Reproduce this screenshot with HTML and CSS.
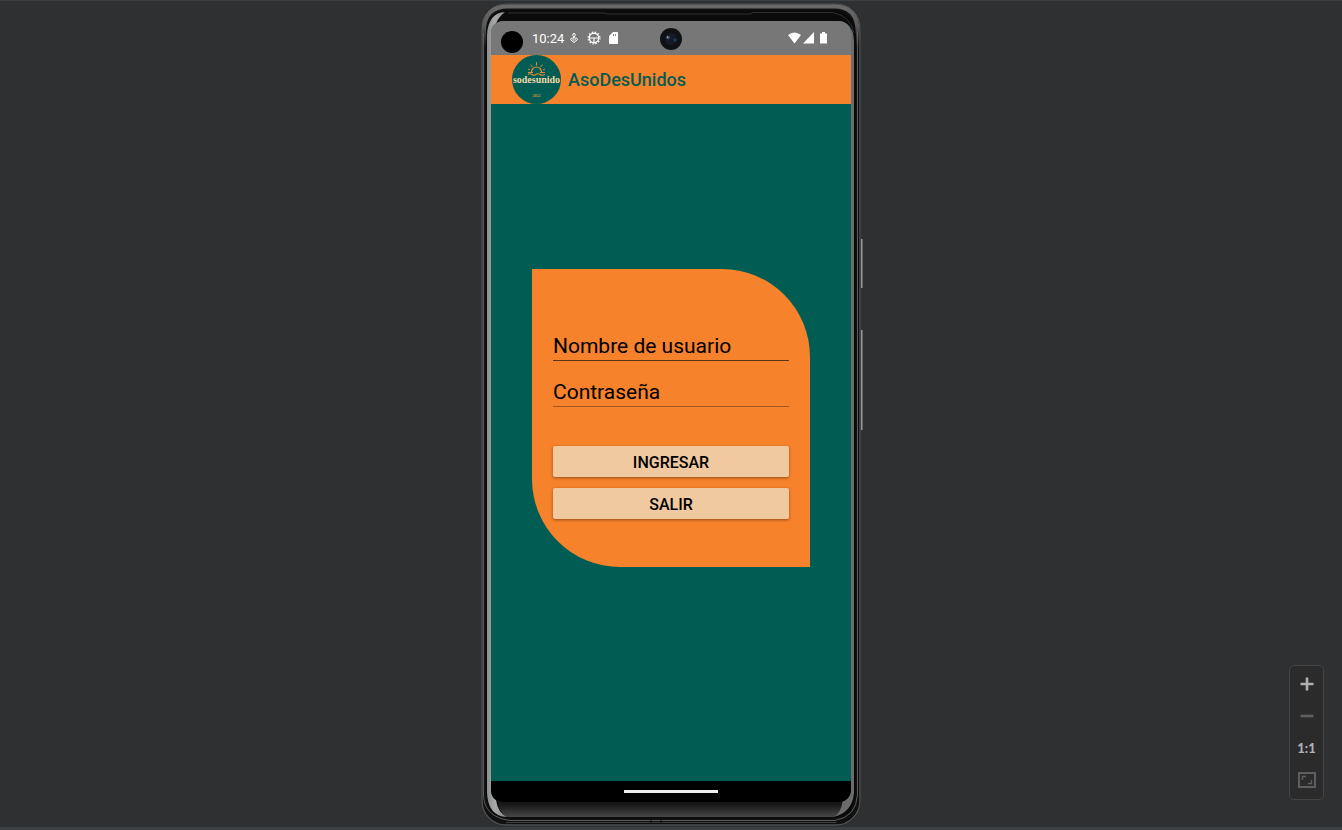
FILE: index.html
```html
<!DOCTYPE html>
<html lang="es">
<head>
<meta charset="utf-8">
<meta name="viewport" content="width=device-width, initial-scale=1">
<title>AsoDesUnidos</title>
<link rel="stylesheet" href="styles.css">
</head>
<body class="emulator">
<main class="stage">
  <div class="phone">
    <svg class="frame" viewBox="0 0 382 823" preserveAspectRatio="none" aria-hidden="true">
      <defs>
        <linearGradient id="silver" x1="0" y1="0" x2="1" y2="0">
          <stop offset="0" stop-color="#8e8e8e"/><stop offset=".4" stop-color="#a8a8a8"/><stop offset="1" stop-color="#858585"/>
        </linearGradient>
        <linearGradient id="chin" x1="0" y1="0" x2="0" y2="1">
          <stop offset="0" stop-color="#080808"/><stop offset=".5" stop-color="#191919"/><stop offset="1" stop-color="#484848"/>
        </linearGradient>
        <linearGradient id="rim" gradientUnits="userSpaceOnUse" x1="0" y1="2" x2="0" y2="44">
          <stop offset="0" stop-color="#6a6a6a"/><stop offset=".5" stop-color="#5a5a5a"/><stop offset="1" stop-color="#5a5a5a" stop-opacity="0"/>
        </linearGradient>
      </defs>
      <rect x="380" y="236" width="2.500" height="49" fill="#9a9a9a"/>
      <rect x="380" y="327" width="2.500" height="100" fill="#9a9a9a"/>
      <rect x="1" y="0" width="380" height="823" rx="25" fill="#1a1a1b"/>
      <rect x="2" y="1" width="378" height="821" rx="24" fill="#101010" stroke="#4e4f50" stroke-width="1.500"/>
      <path d="M4 44V28Q4 3.500 28 3.500H354Q377.500 3.500 377.500 28V44" fill="none" stroke="url(#rim)" stroke-width="4"/>
      <path d="M6 32Q7 7 29 7H352Q374 7 376 32V790Q375 815 351 815H31Q7 815 6 790V32Z" fill="#0a0a0a"/>
      <path d="M28 10H124L127 11H270L273 9.500H352Q370 12 374 30" fill="none" stroke="#303030"/>
      <path d="M377.500 28V792Q376 814 355 817.500H30Q4 814 3.500 792V30" fill="none" stroke="#5c5c5c"/>
      <path d="M7 32Q8 10 25 9Q17 15 15 24L11 32V788Q12 795 16 797Q18 810 27 814Q8 813 7 790Z" fill="url(#silver)"/>
      <path d="M366 20Q374 26 374 38V790Q372 810 353 814Q361 808 363 793L371 782V32Q371 24 366 20Z" fill="#6c6c6c"/>
      <path d="M17 790H363V797Q361 810 354 814H27Q19 810 17 797Z" fill="url(#chin)"/>
      <path d="M26 819.500H356" stroke="#3b3d3e"/>
      <path d="M171 817V821M181 817V821" stroke="#111"/>
    </svg>
    <div class="screen">
      <header class="status">
        <span class="punch"></span>
        <span class="time">10:24</span>
        <svg class="glyph" viewBox="0 0 10 12" width="10" height="12" fill="none" stroke="#fff" aria-hidden="true"><path d="M5 1L3.500 3L5 5L6.500 3Z M3 5.500L1.500 7.500L5 10.500L8.500 7.500L7 5.500M5 5L3.500 7L5 8.500L6.500 7Z"/></svg>
        <svg class="glyph" viewBox="0 0 14 14" width="14" height="14" fill="none" stroke="#fff" aria-hidden="true"><circle cx="7" cy="7" r="4.700" stroke-width="1.400"/><circle cx="7" cy="7" r="6" stroke-width="1.200" stroke-dasharray="1.500 1.640"/><path d="M2.500 7H11.500M7 7V11.500" stroke-width="1.200"/></svg>
        <svg class="glyph" viewBox="0 0 10 12" width="10" height="12" aria-hidden="true"><path d="M4 0H8Q9 0 9 1V11Q9 12 8 12H1Q0 12 0 11V4Z" fill="#fff"/><path d="M4.500 2V4M6.500 2V4" stroke="#888"/></svg>
        <svg class="signals" viewBox="0 0 40 12" width="40" height="12" fill="#fff" aria-hidden="true"><path d="M0 3Q6.500 -2 13 3L6.500 11.500ZM15 11.500L26 0V11.500ZM32 1.500H34V0H37V1.500H39V11.500H32Z"/></svg>
        <svg class="camera" viewBox="0 0 22 22" width="22" height="22" aria-hidden="true"><circle cx="11" cy="11" r="11" fill="#101114"/><circle cx="11" cy="11" r="6" fill="#161a24"/><circle cx="8" cy="9.500" r="1.800" fill="#47536a"/><circle cx="7.500" cy="9" r=".7" fill="#aab3c1"/><circle cx="15" cy="12" r="1.500" fill="#17466e"/></svg>
      </header>
      <div class="appbar">
        <svg class="logo" viewBox="0 0 49 49" role="img" aria-label="Asodesunidos">
          <circle cx="24.500" cy="24.500" r="24.500" fill="#015d54"/>
          <g fill="none" stroke="#e08a35">
            <path d="M19.500 17A5 5 0 0 1 29.500 17" stroke-width="1.200"/>
            <path d="M24.500 7V10.500M18.500 9.500L20.500 12M30.500 9.500L28.500 12M16 14L18 15M33 14L31 15"/>
            <path d="M16 17.500H21M28 17.500H33M16 19.500Q18 18 20 19.500T24 19.500T28 19.500T33 19.500" stroke-width="1.200"/>
          </g>
          <text class="logo-name" x="24.500" y="28" text-anchor="middle">sodesunido</text>
          <text class="logo-year" x="24.500" y="42" text-anchor="middle">2022</text>
        </svg>
        <h1 class="title">AsoDesUnidos</h1>
      </div>
      <div class="content">
        <form class="card">
          <input class="field" type="text" aria-label="Nombre de usuario" placeholder="Nombre de usuario">
          <input class="field field-secret" type="password" aria-label="Contraseña" placeholder="Contraseña">
          <div class="actions">
            <button class="action" type="button">INGRESAR</button>
            <button class="action" type="button">SALIR</button>
          </div>
        </form>
      </div>
      <div class="navbar"><span class="handle"></span></div>
    </div>
  </div>
  <div class="zoom" role="toolbar" aria-label="Zoom">
    <button class="zoom-btn" type="button" aria-label="Acercar"><svg viewBox="0 0 14 14" width="14" height="14"><path d="M7 .5V13.500M.5 7H13.500" stroke="#afb1b3" stroke-width="2.600"/></svg></button>
    <button class="zoom-btn" type="button" aria-label="Alejar"><svg viewBox="0 0 14 14" width="14" height="14"><path d="M.5 7H13.500" stroke="#5d5f61" stroke-width="2.600"/></svg></button>
    <button class="zoom-btn" type="button">1:1</button>
    <button class="zoom-btn" type="button" aria-label="Ajustar"><svg viewBox="0 0 18 16" width="18" height="16" fill="none" stroke="#5d5f61"><path d="M1 1H17V15H1Z" stroke-width="2"/><path d="M4.500 8V4.500H8M10 11.500H13.500V8" stroke-width="1.300"/></svg></button>
  </div>
</main>
</body>
</html>
```
FILE: styles.css
```css
* { box-sizing: border-box; }

.emulator {
  margin: 0;
  background: #2f3032;
  font-family: Roboto, "Liberation Sans", sans-serif;
}

.stage {
  position: relative;
  display: flex;
  justify-content: center;
  min-height: 100vh;
  padding: 2px 0 1px;
  border-top: 1px solid #3c3f41;
  border-bottom: 3px solid #3c3f41;
}

.phone {
  position: relative;
  display: flex;
  width: 100%;
  max-width: 382px;
  padding: 18px 11px 24px;
}

.frame {
  position: absolute;
  inset: 0;
  width: 100%;
  height: 100%;
  overflow: visible;
}

.screen {
  position: relative;
  flex: 1;
  display: flex;
  flex-direction: column;
  overflow: hidden;
  border-radius: 12px;
  background: #015d54;
}

.status {
  position: relative;
  display: flex;
  align-items: center;
  height: 34px;
  padding: 0 23px 0 10px;
  background: #777;
  color: #fff;
}

.punch {
  width: 22px;
  height: 22px;
  margin: 7px 9px 0 0;
  border-radius: 50%;
  background: #000;
}

.time { margin-right: 5px; font-size: 13px; }
.glyph { margin-right: 8px; }
.signals { margin-left: auto; }

.camera {
  position: absolute;
  top: 7px;
  left: calc(50% - 11px);
}

.appbar {
  display: flex;
  align-items: center;
  gap: 7px;
  height: 49px;
  padding-left: 21px;
  background: #f6822b;
}

.logo { width: 49px; height: 49px; }

.logo-name {
  fill: #f0d9a8;
  font: bold 10px "Liberation Serif", serif;
}

.logo-year {
  fill: #d59143;
  font: bold 4px "Liberation Serif", serif;
}

.title {
  margin: 0;
  color: #015d54;
  font-size: 18px;
  font-weight: 500;
}

.content {
  flex: 1;
  display: flex;
  align-items: center;
  padding: 0 41px 49px;
}

.card {
  display: flex;
  flex-direction: column;
  gap: 16px;
  width: 100%;
  padding: 62px 21px 48px;
  border-radius: 0 88px;
  background: #f6822b;
}

.field {
  width: 100%;
  height: 30px;
  padding: 0;
  border: 0;
  border-bottom: 1px solid #5c3519;
  outline: 0;
  background: none;
  color: #000;
  font: 21px Roboto, "Liberation Sans", sans-serif;
}

.field::placeholder { color: #000; opacity: 1; }
.field-secret { border-bottom-color: #a2581f; }

.actions {
  display: flex;
  flex-direction: column;
  gap: 11px;
  padding-top: 23px;
}

.action {
  height: 31px;
  padding: 1px 0 0;
  border: 0;
  border-radius: 2px;
  background: #f0c9a0;
  box-shadow: 0 1px 3px rgba(60, 30, 0, 0.5);
  color: #000;
  font: 500 16px Roboto, "Liberation Sans", sans-serif;
}

.navbar {
  display: flex;
  align-items: center;
  justify-content: center;
  height: 21px;
  background: #000;
}

.handle {
  width: 94px;
  height: 3px;
  background: #eee;
}

.zoom {
  position: absolute;
  right: 18px;
  bottom: 27px;
  display: flex;
  flex-direction: column;
  width: 35px;
  padding: 2px 0 3px;
  border: 1px solid #424446;
  border-radius: 5px;
  background: #2b2b2b;
}

.zoom-btn {
  display: flex;
  align-items: center;
  justify-content: center;
  height: 32px;
  padding: 0;
  border: 0;
  background: none;
  color: #afb1b3;
  font: 900 13px Lato, sans-serif;
}
```
